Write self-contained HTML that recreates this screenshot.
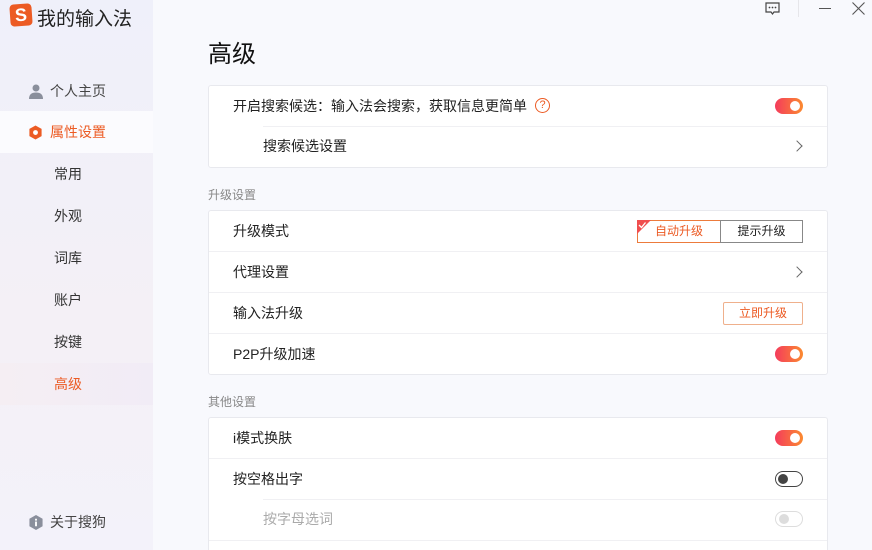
<!DOCTYPE html>
<html style="width:872px;height:550px;overflow:hidden"><head><meta charset="utf-8"><style>
*{margin:0;padding:0;box-sizing:border-box}
body{width:872px;height:550px;overflow:hidden;background:#f8f9fd;font-family:"Liberation Sans","Noto Sans CJK SC",sans-serif;position:relative;color:#222}
.side{position:absolute;left:0;top:0;width:153px;height:550px;background:linear-gradient(180deg,#eff0fa 0%,#f4f0f6 60%,#f3f2fa 100%)}
.abs{position:absolute}
.logo{left:10px;top:4px;width:22px;height:22px;background:#ec5b24;border-radius:4px;color:#fff;font-weight:bold;font-size:18px;text-align:center;line-height:22px;transform:rotate(-4deg)}
.title{left:37px;top:4px;font-size:19px;color:#222}
.nav{position:absolute;left:0;width:153px;height:42px;font-size:14px;line-height:42px;color:#333}
.nav.sub{padding-left:54px}
.sel{background:#fbfbfe}
.card{position:absolute;left:208px;width:620px;background:#fff;border:1px solid #e8e9ee;border-radius:3px;overflow:hidden}
.row{position:relative;height:41px;font-size:14px;line-height:40px;padding-left:24px;border-top:1px solid #f0f0f3}
.row:first-child{border-top:none;height:40px}
.row.s{padding-left:54px;border-top:none}
.row.s:before{content:"";position:absolute;left:54px;right:0;top:0;border-top:1px solid #f0f0f3}
.tg{position:absolute;right:24px;top:12px;width:28px;height:16px;border-radius:8px;background:linear-gradient(90deg,#f43c5c,#fb8a30)}
.tg:after{content:"";position:absolute;right:3px;top:3px;width:10px;height:10px;border-radius:50%;background:#fff}
.tg.off{background:#fff;border:1.5px solid #444}
.tg.off:after{left:2px;top:2px;background:#444}
.tg.dis{background:#fff;border:1px solid #ddd}
.tg.dis:after{left:3px;top:2px;background:#ddd}
.chev{position:absolute;right:26px;top:16px;width:8px;height:8px;border-top:1.3px solid #666;border-right:1.3px solid #666;transform:rotate(45deg)}
.lbl{position:absolute;left:208px;font-size:12px;color:#888}
</style></head><body>
<div class="side">
<div class="abs logo">S</div>
<div class="abs title">我的输入法</div>
<div class="nav" style="top:70px;padding-left:50px;color:#444">个人主页
<svg class="abs" style="left:29px;top:14px" width="14" height="15" viewBox="0 0 14 15"><circle cx="7" cy="4" r="3.5" fill="#8a8f9c"/><path d="M0 15 Q0 8.5 7 8.5 Q14 8.5 14 15Z" fill="#8a8f9c"/></svg></div>
<div class="nav sel" style="top:111px;padding-left:50px;color:#ec5b24">属性设置
<svg class="abs" style="left:28px;top:14px" width="15" height="15" viewBox="0 0 16 16"><path d="M8 0.5 L14.5 4.2 L14.5 11.8 L8 15.5 L1.5 11.8 L1.5 4.2Z" fill="#ec5b24"/><circle cx="8" cy="8" r="2.6" fill="#fff"/></svg></div>
<div class="nav sub" style="top:153px">常用</div>
<div class="nav sub" style="top:195px">外观</div>
<div class="nav sub" style="top:237px">词库</div>
<div class="nav sub" style="top:279px">账户</div>
<div class="nav sub" style="top:321px">按键</div>
<div class="nav sub" style="top:363px;color:#ec5b24;background:linear-gradient(90deg,#f5eef3,#f1ecf6)">高级</div>
<div class="nav" style="top:501px;padding-left:50px;color:#444">关于搜狗
<svg class="abs" style="left:29px;top:14px" width="14" height="15" viewBox="0 0 14 16"><path d="M7 0 L14 4 L14 12 L7 16 L0 12 L0 4Z" fill="#8a8f9c"/><rect x="6" y="7" width="2" height="5" fill="#fff"/><rect x="6" y="4" width="2" height="2" fill="#fff"/></svg></div>
</div>
<svg class="abs" style="left:765px;top:2px" width="15" height="13" viewBox="0 0 15 13"><path d="M1 1H14V10H9L7.5 12L6 10H1Z" fill="none" stroke="#444" stroke-width="1.2"/><circle cx="4.5" cy="5.5" r="0.9" fill="#444"/><circle cx="7.5" cy="5.5" r="0.9" fill="#444"/><circle cx="10.5" cy="5.5" r="0.9" fill="#444"/></svg>
<div class="abs" style="left:798px;top:0;width:1px;height:17px;background:#e6e6ea"></div>
<div class="abs" style="left:819px;top:8px;width:12px;height:1px;background:#555"></div>
<svg class="abs" style="left:852px;top:2px" width="13" height="13" viewBox="0 0 13 13"><path d="M0.5 0.5L12.5 12.5M12.5 0.5L0.5 12.5" stroke="#555" stroke-width="1.1"/></svg>
<div class="abs" style="left:208px;top:34px;font-size:24px;color:#111">高级</div>
<div class="card" style="top:85px">
<div class="row">开启搜索候选：输入法会搜索，获取信息更简单<span style="position:absolute;left:326px;top:12px;width:15px;height:15px;border:1.3px solid #ec5b24;border-radius:50%;color:#ec5b24;font-size:11px;line-height:13px;text-align:center">?</span><div class="tg"></div></div>
<div class="row s">搜索候选设置<div class="chev"></div></div>
</div>
<div class="lbl" style="top:186px">升级设置</div>
<div class="card" style="top:210px">
<div class="row">升级模式
<div class="abs" style="left:428px;top:9px;width:84px;height:23px;border:1px solid #ec7b3c;color:#ec5b24;font-size:12px;line-height:21px;text-align:center">自动升级<svg class="abs" style="left:-1px;top:-1px" width="14" height="14" viewBox="0 0 14 14"><path d="M0 0H14L0 14Z" fill="#f04e4e"/><path d="M2 5L4.5 7.5L8.5 2.5" stroke="#fff" stroke-width="1.3" fill="none"/></svg></div>
<div class="abs" style="left:511px;top:9px;width:83px;height:23px;border:1px solid #888;font-size:12px;line-height:21px;text-align:center;color:#222">提示升级</div></div>
<div class="row">代理设置<div class="chev"></div></div>
<div class="row">输入法升级<div class="abs" style="left:514px;top:9px;width:80px;height:23px;border:1px solid #efb08c;border-radius:2px;color:#ec5b24;font-size:12px;line-height:21px;text-align:center">立即升级</div></div>
<div class="row">P2P升级加速<div class="tg"></div></div>
</div>
<div class="lbl" style="top:393px">其他设置</div>
<div class="card" style="top:417px;height:133px;border-bottom:none;border-radius:3px 3px 0 0">
<div class="row">i模式换肤<div class="tg"></div></div>
<div class="row">按空格出字<div class="tg off"></div></div>
<div class="row s" style="color:#aaa">按字母选词<div class="tg dis"></div></div>
<div class="row" style="height:11px"></div>
</div>
</body></html>
